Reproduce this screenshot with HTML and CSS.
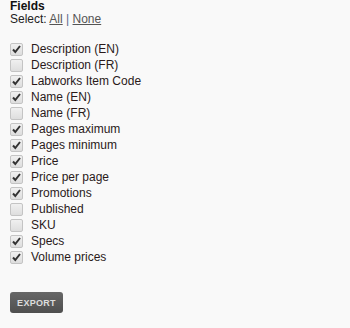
FILE: index.html
```html
<!DOCTYPE html>
<html lang="en">
<head>
  <meta charset="UTF-8">
  <title>Export</title>
  <link rel="stylesheet" href="styles.css">
</head>
<body>

<div class="export-form">
  <div class="fields-title">Fields</div>
  <div class="select-links">Select: <a href="#">All</a> <span class="sep">|</span> <a href="#">None</a></div>

  <ul class="field-list">
    <li><label><input type="checkbox" checked> Description (EN)</label></li>
    <li><label><input type="checkbox"> Description (FR)</label></li>
    <li><label><input type="checkbox" checked> Labworks Item Code</label></li>
    <li><label><input type="checkbox" checked> Name (EN)</label></li>
    <li><label><input type="checkbox"> Name (FR)</label></li>
    <li><label><input type="checkbox" checked> Pages maximum</label></li>
    <li><label><input type="checkbox" checked> Pages minimum</label></li>
    <li><label><input type="checkbox" checked> Price</label></li>
    <li><label><input type="checkbox" checked> Price per page</label></li>
    <li><label><input type="checkbox" checked> Promotions</label></li>
    <li><label><input type="checkbox"> Published</label></li>
    <li><label><input type="checkbox"> SKU</label></li>
    <li><label><input type="checkbox" checked> Specs</label></li>
    <li><label><input type="checkbox" checked> Volume prices</label></li>
  </ul>

  <button class="export-btn">EXPORT</button>
</div>

</body>
</html>
```

FILE: styles.css
```css
* {
  margin: 0;
  padding: 0;
  box-sizing: border-box;
}

html, body {
  height: 100%;
  font-family: "Liberation Sans", Arial, sans-serif;
  font-size: 12px;
  background-color: #f9f9f9;
  color: #222;
}

.export-form {
  padding: 0 10px;
}

.fields-title {
  font-weight: bold;
  line-height: 12px;
  color: #111;
}

.select-links {
  line-height: 14px;
  color: #222;
}

.select-links a {
  color: #555;
  text-decoration: underline;
}

.select-links .sep {
  color: #5a6b8c;
}

.field-list {
  list-style: none;
  margin-top: 15px;
}

.field-list li {
  height: 16px;
  line-height: 16px;
}

.field-list label {
  display: flex;
  align-items: center;
  gap: 8px;
  color: #2a1a1a;
}

.field-list input {
  -webkit-appearance: none;
  appearance: none;
  width: 13px;
  height: 13px;
  margin: 0;
  border: 1px solid #c4c4c4;
  border-radius: 2px;
  background: linear-gradient(#f0f0f0, #dedede);
}

.field-list input:checked {
  background-image: url("data:image/svg+xml,%3Csvg xmlns='http://www.w3.org/2000/svg' viewBox='0 0 11 11'%3E%3Cpath d='M2 5.5 L4.3 8 L9 2' fill='none' stroke='%23333' stroke-width='2'/%3E%3C/svg%3E"), linear-gradient(#f0f0f0, #dedede);
  background-size: 11px 11px, auto;
  background-repeat: no-repeat;
}

.export-btn {
  margin-top: 27px;
  width: 53px;
  height: 21px;
  border: none;
  border-radius: 3px;
  background: linear-gradient(#676767, #4f4f4f);
  color: #ddd;
  font-family: "Liberation Sans", Arial, sans-serif;
  font-size: 9px;
  font-weight: bold;
  letter-spacing: 0.3px;
  cursor: pointer;
}
```
